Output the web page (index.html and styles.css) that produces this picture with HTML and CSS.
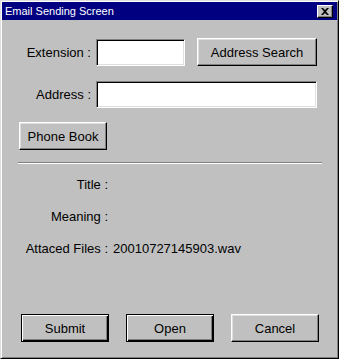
FILE: index.html
```html
<!DOCTYPE html>
<html lang="en">
<head>
  <meta charset="UTF-8" />
  <title>Email Sending Screen</title>
  <link rel="stylesheet" href="styles.css">
</head>
<body>
  <div class="ventana">
    <div class="barra-titulo">
      <span class="titulo">Email Sending Screen</span>
      <button class="cerrar" type="button">
        <svg width="8" height="7" viewBox="0 0 8 7">
          <path d="M0 0h2l2 2 2-2h2L5 3.5 8 7H6L4 5 2 7H0l3-3.5z" fill="#000"/>
        </svg>
      </button>
    </div>

    <div class="contenido">
      <div class="fila">
        <label class="etiqueta" for="extension">Extension :</label>
        <input class="campo campo-corto" id="extension" type="text" />
        <button class="boton boton-buscar" type="button">Address Search</button>
      </div>

      <div class="fila fila-address">
        <label class="etiqueta" for="address">Address :</label>
        <input class="campo campo-largo" id="address" type="text" />
      </div>

      <button class="boton boton-phone" type="button">Phone Book</button>

      <div class="separador"></div>

      <div class="info">
        <div class="info-fila"><span class="info-etiqueta">Title :</span><span class="info-valor"></span></div>
        <div class="info-fila"><span class="info-etiqueta">Meaning :</span><span class="info-valor"></span></div>
        <div class="info-fila"><span class="info-etiqueta">Attaced Files :</span><span class="info-valor">20010727145903.wav</span></div>
      </div>

      <div class="acciones">
        <button class="boton boton-defecto" type="button">Submit</button>
        <button class="boton boton-defecto" type="button">Open</button>
        <button class="boton" type="button">Cancel</button>
      </div>
    </div>
  </div>
</body>
</html>
```

FILE: styles.css
```css
body {
  margin: 0;
  background: #c0c0c0;
  font-family: "Liberation Sans", Arial, sans-serif;
  font-size: 13px;
  color: #000;
}

.ventana {
  width: 339px;
  height: 359px;
  box-sizing: border-box;
  background: #c0c0c0;
  border: 1px solid;
  border-color: #dfdfdf #000 #000 #dfdfdf;
  box-shadow: inset 1px 1px #fff, inset -1px -1px #808080;
  padding: 1px;
  display: flex;
  flex-direction: column;
}

.barra-titulo {
  height: 18px;
  background: #000080;
  color: #fff;
  display: flex;
  align-items: center;
  justify-content: space-between;
  padding-left: 3px;
}

.titulo {
  font-size: 11px;
  line-height: 18px;
}

.cerrar {
  width: 16px;
  height: 13px;
  margin-right: 4px;
  padding: 0;
  background: #c0c0c0;
  border: 1px solid;
  border-color: #fff #000 #000 #fff;
  box-shadow: inset -1px -1px #808080;
  display: flex;
  align-items: center;
  justify-content: center;
}

.contenido {
  flex: 1;
  display: flex;
  flex-direction: column;
  align-items: flex-start;
  padding: 18px 0 15px 17px;
}

.fila {
  display: flex;
  align-items: center;
  height: 28px;
}

.fila-address {
  margin-top: 14px;
}

.etiqueta {
  width: 72px;
  text-align: right;
  margin-right: 5px;
}

.campo {
  height: 27px;
  box-sizing: border-box;
  margin: 0;
  background: #fff;
  border: 1px solid;
  border-color: #808080 #fff #fff #808080;
  box-shadow: inset 1px 1px #000, inset -1px -1px #dfdfdf;
  font: inherit;
  padding: 0 4px;
}

.campo-corto {
  width: 89px;
}

.campo-largo {
  width: 221px;
}

.boton {
  height: 28px;
  width: 88px;
  box-sizing: border-box;
  margin: 0;
  padding: 0;
  background: #c0c0c0;
  border: 1px solid;
  border-color: #fff #000 #000 #fff;
  box-shadow: inset -1px -1px #808080, inset 1px 1px #dfdfdf;
  font: inherit;
  color: #000;
}

.boton-buscar {
  width: 120px;
  margin-left: 12px;
}

.boton-phone {
  margin-top: 14px;
  margin-left: 0;
}

.boton-defecto {
  border-color: #000;
  box-shadow: inset 1px 1px #fff, inset -1px -1px #000, inset -2px -2px #808080;
}

.separador {
  width: 304px;
  height: 1px;
  margin: 12px 0 0 -1px;
  background: #808080;
  border-bottom: 1px solid #fff;
}

.info {
  margin-top: 13px;
  display: flex;
  flex-direction: column;
  gap: 16px;
}

.info-fila {
  display: flex;
  line-height: 16px;
}

.info-etiqueta {
  width: 89px;
  text-align: right;
}

.info-valor {
  margin-left: 5px;
}

.acciones {
  margin-top: auto;
  margin-left: 2px;
  display: flex;
  gap: 17px;
}
```
